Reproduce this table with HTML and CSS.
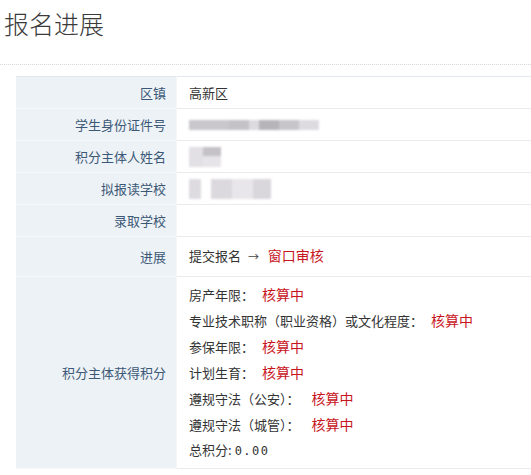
FILE: index.html
```html
<!DOCTYPE html>
<html lang="zh-CN">
<head>
<meta charset="utf-8">
<title>报名进展</title>
<link rel="stylesheet" href="styles.css">
</head>
<body>
<div class="page">
  <h1 class="title">报名进展</h1>
  <div class="divider"></div>
  <table class="info">
    <tr>
      <td class="label">区镇</td>
      <td class="value">高新区</td>
    </tr>
    <tr>
      <td class="label">学生身份证件号</td>
      <td class="value"><span class="mask mask-id"><i class="m1"></i><i class="m2"></i><i class="m3"></i><i class="m4"></i><i class="m5"></i><i class="m6"></i></span></td>
    </tr>
    <tr>
      <td class="label">积分主体人姓名</td>
      <td class="value"><span class="mask mask-name"><i class="n1"></i><i class="n2"></i></span></td>
    </tr>
    <tr>
      <td class="label">拟报读学校</td>
      <td class="value"><span class="mask mask-school"><i class="s1"></i><i class="s2"></i><i class="s3"></i><i class="s4"></i></span></td>
    </tr>
    <tr>
      <td class="label">录取学校</td>
      <td class="value"></td>
    </tr>
    <tr class="row-progress">
      <td class="label">进展</td>
      <td class="value">提交报名 <span class="arrow">→</span> <span class="red step">窗口审核</span></td>
    </tr>
    <tr class="row-score">
      <td class="label">积分主体获得积分</td>
      <td class="value">
        <div class="line">房产年限：<span class="red">核算中</span></div>
        <div class="line">专业技术职称（职业资格）或文化程度：<span class="red">核算中</span></div>
        <div class="line">参保年限：<span class="red">核算中</span></div>
        <div class="line">计划生育：<span class="red">核算中</span></div>
        <div class="line">遵规守法（公安）：<span class="red wide">核算中</span></div>
        <div class="line">遵规守法（城管）：<span class="red wide">核算中</span></div>
        <div class="line">总积分:<span class="num">0.00</span></div>
      </td>
    </tr>
  </table>
</div>
</body>
</html>
```

FILE: styles.css
```css
html, body {
  margin: 0;
  padding: 0;
  background: #fff;
}
body {
  font-family: "Noto Sans CJK SC", "Noto Sans", sans-serif;
  font-size: 13px;
  color: #333;
  overflow: hidden;
}
.page {
  width: 531px;
}
.title {
  margin: 7px 0 0 4px;
  font-size: 25px;
  line-height: 32px;
  font-weight: 300;
  color: #3a3a3a;
}
.divider {
  margin-top: 25px;
  border-top: 1px dotted #d8d8d8;
}
.info {
  margin: 11px 0 0 16px;
  width: 515px;
  border-collapse: collapse;
  border-top: 1px solid #e2e8ed;
}
.info td {
  padding: 7px 0;
  height: 17px;
  line-height: 17px;
  vertical-align: middle;
}
.label {
  width: 150px;
  padding-right: 10px !important;
  text-align: right;
  background: #edf2f6;
  color: #3b5877;
  border-bottom: 1px solid #f6f8fa;
}
.value {
  padding-left: 12px !important;
  border-left: 1px solid #f4f6f8;
  border-bottom: 1px solid #e8ecef;
  background: #fff;
}
.row-progress td {
  padding: 10px 0 11px;
}
.row-score td {
  padding: 4px 0 5px;
}
.line {
  line-height: 26px;
  height: 26px;
}
.red {
  color: #c8161d;
  font-size: 14px;
  margin-left: 8px;
}
.red.step {
  margin-left: 0;
}
.red.wide {
  margin-left: 12px;
}
.arrow {
  font-size: 11px;
  color: #444;
  margin: 0 6px 0 4px;
}
.num {
  font-family: "DejaVu Sans Mono", monospace;
  font-size: 12px;
  letter-spacing: 1.5px;
  margin-left: 3px;
}
.mask {
  display: inline-flex;
  vertical-align: top;
  height: 17px;
  align-items: center;
  filter: blur(0.8px);
}
.mask i {
  display: block;
}
.mask-id i { height: 10px; }
.mask-id .m1 { width: 40px; background: #c9c6cc; }
.mask-id .m2 { width: 20px; background: #c4c1c7; }
.mask-id .m3 { width: 10px; background: #dcdadf; }
.mask-id .m4 { width: 20px; background: #b6b3b9; }
.mask-id .m5 { width: 20px; background: #c7c4ca; }
.mask-id .m6 { width: 20px; background: #dddbe0; }
.mask-name i, .mask-school i { height: 20px; margin: -2px 0; }
.mask-name .n1 { width: 14px; background: #e2e0e4; }
.mask-name .n2 { width: 18px; background: linear-gradient(#c4c1c7 0 45%, #e6e4e8 45%); }
.mask-school .s1 { width: 12px; background: #dedbe0; }
.mask-school .s2 { width: 10px; background: #fff; }
.mask-school .s3 { width: 42px; background: linear-gradient(90deg, #dcd9de 0 50%, #e8e6ea 50%); }
.mask-school .s4 { width: 18px; background: #d9d7dc; }
```
